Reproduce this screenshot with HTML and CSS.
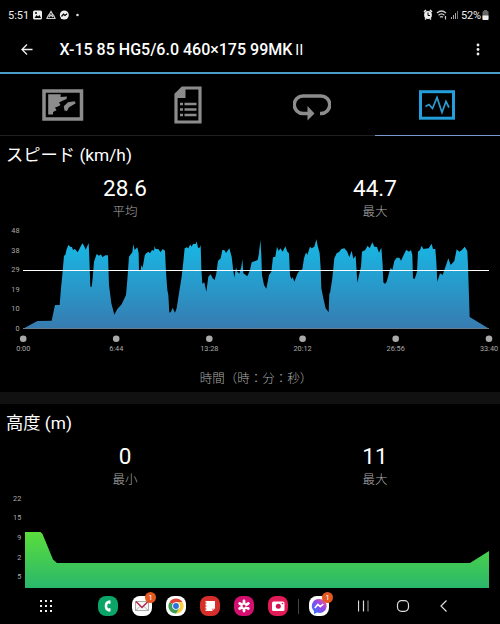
FILE: index.html
```
<!DOCTYPE html>
<html lang="ja">
<head>
    <meta charset="UTF-8">
    <meta name="viewport" content="width=device-width, initial-scale=1.0">
    <title>X-15 85 HG5/6.0 460×175 99MKⅡ</title>
    <link rel="stylesheet" href="styles.css">
</head>
<body>
    <div class="status-bar">
        <span class="clock">5:51</span>
        <svg class="status-icons" width="50" height="12" viewBox="0 0 50 12">
            <rect x="1" y="1.500" width="9" height="9" rx="1.500" fill="#eee"/>
            <path d="M2.500 9l2-3 1.500 1.500L7.500 6l1.500 3z" fill="#000"/>
            <circle cx="4" cy="4" r="1" fill="#000"/>
            <path d="M15 9.500h8L21.500 6h-5zM17 6l2-3.500L21 6M17 8l2-2 2 2" fill="none" stroke="#ccc" stroke-width="1.200"/>
            <circle cx="32.300" cy="6" r="4.500" fill="#eee"/>
            <path d="M29 10l0-3 3 3z" fill="#eee"/>
            <path d="M29.500 7.500l2-2.300 1.500 1.300 2-1.700" fill="none" stroke="#000" stroke-width="1.200"/>
            <circle cx="45.500" cy="6" r="1.300" fill="#ddd"/>
        </svg>
        <svg class="status-right" width="38" height="12" viewBox="0 0 38 12">
            <path d="M1 3l2-2M9 3L7 1M2 10.500l1-1M8 10.500l-1-1" stroke="#eee" stroke-width="1.500"/>
            <circle cx="5" cy="6" r="3.900" fill="#eee"/>
            <path d="M5 3.500v3h2" fill="none" stroke="#000"/>
            <path d="M14 4q4.500-4 9 0M15.500 6.300q3-2.700 6 0M17 8.300q1.500-1.300 3 0M22.500 7v3.500" fill="none" stroke="#ccc" stroke-width="1.200"/>
            <path d="M28.500 8v2M30.500 6v4M32.500 4v6" stroke="#aaa"/>
            <path d="M34.500 2v8" stroke="#777"/>
        </svg>
        <span class="battery-text">52%</span>
        <svg width="7" height="12" viewBox="0 0 7 12">
            <rect x="2" y="1" width="3" height="2" fill="#666"/>
            <rect x="0.500" y="2" width="6" height="9" rx="1" fill="#666"/>
            <path d="M.5 6.500h6V10q0 1-1 1h-4q-1 0-1-1z" fill="#eee"/>
        </svg>
    </div>

    <div class="app-bar">
        <svg width="14" height="14" viewBox="0 0 14 14">
            <path d="M12.500 6.500H2M7 1.500L2 6.500l5 5" fill="none" stroke="#eee" stroke-width="1.300"/>
        </svg>
        <h1>X-15 85 HG5/6.0 460×175 99MK<span class="numeral">Ⅱ</span></h1>
        <svg class="more" width="4" height="14" viewBox="0 0 4 14" fill="#eee">
            <circle cx="2" cy="2" r="1.400"/>
            <circle cx="2" cy="6.500" r="1.400"/>
            <circle cx="2" cy="11" r="1.400"/>
        </svg>
    </div>

    <div class="tabs">
        <div class="tab">
            <svg width="42" height="32" viewBox="0 0 42 32">
                <rect x="2" y="2" width="37.500" height="28" fill="none" stroke="#8c8c8c" stroke-width="3.500"/>
                <path d="M6.200 5.300H18.800L18.500 8 25 7.600 24.500 10 20 12 17 13.600 18.500 16 16 17.500 13 18.600 14.500 21.300 11 23V25.600H6.200z" fill="#8c8c8c"/>
                <path d="M21.800 17.300L26 13.300 32.500 12.300 33.800 14.300 30 16.600 26.800 18.600 25 22 22.500 21.600z" fill="#8c8c8c"/>
            </svg>
        </div>
        <div class="tab">
            <svg width="28" height="38" viewBox="0 0 28 38">
                <path d="M8.500 2H26v34H2V8.500z" fill="none" stroke="#8c8c8c" stroke-width="3.200"/>
                <path d="M11.500 1v11H1V8.500L8 1z" fill="#8c8c8c"/>
                <path d="M6 18h3M6 23.500h3M6 29h3M10.500 18h12M10.500 23.500h12M10.500 29h12" stroke="#8c8c8c" stroke-width="2.600"/>
            </svg>
        </div>
        <div class="tab loop">
            <svg width="38" height="28" viewBox="0 0 38 28">
                <path d="M15.500 20.500h-5.500a8.500 8.500 0 0 1 0-17.500h18a8.500 8.500 0 0 1 0 17.500h-1" fill="none" stroke="#8c8c8c" stroke-width="3.500"/>
                <path d="M14.500 13l7 7.500-7 7z" fill="#8c8c8c"/>
            </svg>
        </div>
        <div class="tab active">
            <svg width="36" height="30" viewBox="0 0 36 30">
                <rect x="1.500" y="1.700" width="33" height="26.500" fill="none" stroke="#239fdc" stroke-width="3"/>
                <path d="M6.500 16.500l3.500-2 3.500 4 4.500-11 5 15 4-11 3 6" fill="none" stroke="#2b9bd3" stroke-width="1.700"/>
            </svg>
        </div>
    </div>

    <section class="speed">
        <h2>スピード (km/h)</h2>
        <div class="stats">
            <div class="stat"><b>28.6</b><span>平均</span></div>
            <div class="stat"><b>44.7</b><span>最大</span></div>
        </div>
        <svg class="chart" width="500" height="130" viewBox="0 0 500 130">
            <defs>
                <linearGradient id="blue" gradientUnits="userSpaceOnUse" x1="0" y1="45" x2="0" y2="310">
                    <stop offset="0" stop-color="#17b9e6"/>
                    <stop offset="1" stop-color="#377bb0"/>
                </linearGradient>
            </defs>
            <g class="ticks">
                <text x="19.500" y="8">48</text>
                <text x="19.500" y="27.600">38</text>
                <text x="19.500" y="47.200">29</text>
                <text x="19.500" y="66.800">19</text>
                <text x="19.500" y="86.400">10</text>
                <text x="19.500" y="106">0</text>
            </g>
            <path transform="scale(.33333)" fill="url(#blue)" d="M72 310L112 288 155 287 165 240 179 240 183 190 187 150 192 92 196 90 199 76 205 60 212 66 216 66 219 75 225 72 233 82 240 68 247 55 252 62 257 74 266 54 268 100 271 185 275 185 278 160 282 110 290 87 297 92 303 88 307 97 316 91 324 91 327 180 334 235 343 269 352 252 365 238 378 210 382 165 387 95 397 82 400 58 404 75 412 67 416 85 417 138 422 138 424 120 428 128 434 92 437 86 445 80 450 85 456 75 462 77 464 63 467 72 475 72 482 82 488 72 495 77 498 140 502 195 505 210 508 263 513 260 518 248 525 263 530 250 537 205 545 155 550 110 554 70 560 67 565 70 571 58 574 65 580 56 587 57 590 49 594 68 599 68 602 60 604 130 607 176 613 172 619 200 625 155 632 148 638 160 644 165 649 145 654 108 662 100 667 75 673 75 678 84 688 70 695 95 699 130 703 158 708 127 712 140 718 146 724 125 727 102 730 145 742 154 750 135 755 112 773 105 777 85 781 45 784 90 786 150 792 180 799 191 807 150 814 140 819 97 826 95 831 65 836 78 841 70 848 80 856 64 862 80 867 85 870 150 874 162 878 157 883 170 893 145 898 138 907 133 912 100 918 82 922 90 930 65 935 70 943 65 949 43 953 62 959 85 962 130 964 190 970 220 977 250 986 262 988 205 990 205 997 160 1003 100 1010 85 1018 80 1024 72 1033 70 1042 80 1048 97 1055 77 1060 101 1067 92 1070 140 1072 173 1077 150 1083 125 1086 80 1095 76 1103 62 1109 70 1117 52 1123 65 1131 66 1137 83 1144 68 1148 120 1150 172 1155 177 1160 170 1167 145 1172 128 1177 135 1183 108 1190 98 1198 98 1203 107 1212 88 1219 74 1227 80 1233 75 1237 90 1239 160 1244 162 1251 140 1254 80 1260 75 1265 62 1270 72 1286 70 1295 56 1299 72 1306 72 1309 110 1312 170 1320 145 1328 150 1335 130 1345 100 1352 120 1363 108 1370 73 1378 80 1386 75 1394 65 1402 78 1404 120 1409 276 1465 310z"/>
            <!-- baseline and average speed -->
            <path d="M23 103.500h466" stroke="#647e8c"/>
            <path d="M23 45.500h466" stroke="#fff"/>
            <g fill="#aaa">
                <circle cx="23.200" cy="113.700" r="3.300"/>
                <circle cx="116.200" cy="113.700" r="3.300"/>
                <circle cx="209.300" cy="113.700" r="3.300"/>
                <circle cx="302.600" cy="113.700" r="3.300"/>
                <circle cx="395.700" cy="113.700" r="3.300"/>
                <circle cx="489" cy="113.700" r="3.300"/>
            </g>
            <g class="times">
                <text x="23.200" y="126">0:00</text>
                <text x="116.200" y="126">6:44</text>
                <text x="209.300" y="126">13:28</text>
                <text x="302.600" y="126">20:12</text>
                <text x="395.700" y="126">26:56</text>
                <text x="489" y="126">33:40</text>
            </g>
        </svg>
        <p class="axis-title">時間（時：分：秒）</p>
    </section>

    <section class="altitude">
        <h2>高度 (m)</h2>
        <div class="stats">
            <div class="stat"><b>0</b><span>最小</span></div>
            <div class="stat"><b>11</b><span>最大</span></div>
        </div>
        <svg class="chart" width="500" height="95" viewBox="0 0 500 95">
            <defs>
                <linearGradient id="green" x1="0" y1="0" x2="0" y2="1">
                    <stop offset="0" stop-color="#5add3c"/>
                    <stop offset="1" stop-color="#2ab76b"/>
                </linearGradient>
            </defs>
            <g class="ticks">
                <text x="21.300" y="7.500">22</text>
                <text x="21.300" y="27.200">15</text>
                <text x="21.300" y="46.900">9</text>
                <text x="21.300" y="66.600">2</text>
                <text x="21.300" y="86.300">5</text>
            </g>
            <path d="M25 39H40.500L42.500 41 53 66.500 57 70H470L489 58V95H25z" fill="url(#green)"/>
        </svg>
    </section>

    <nav class="nav-bar">
        <svg class="apps" width="12" height="12" viewBox="0 0 12 12" fill="#eee">
            <path d="M0 0h2v2H0zM5 0h2v2H5zM10 0h2v2h-2zM0 5h2v2H0zM5 5h2v2H5zM10 5h2v2h-2zM0 10h2v2H0zM5 10h2v2H5zM10 10h2v2h-2z"/>
        </svg>
        <div class="dock">
            <div class="app phone">
                <svg viewBox="0 0 20 20">
                    <path d="M11.500 5.800Q8 6 8 10t3.500 4.200" fill="none" stroke="#fff" stroke-width="2.600"/>
                    <path d="M10.500 4.500h2v3.200h-2zM10.500 12.300h2v3.200h-2z" fill="#fff"/>
                </svg>
            </div>
            <div class="app mail">
                <svg viewBox="0 0 20 20"><rect x="3.500" y="5.500" width="13" height="9" fill="#f7f7f7" stroke="#aaa"/><path d="M3.500 14.500l4.500-4M16.500 14.500l-4.500-4" stroke="#bbb"/><path d="M4 5.500l6 6 6-6" fill="none" stroke="#b3264e" stroke-width="1.500"/></svg>
                <span class="badge">1</span>
            </div>
            <div class="app chrome">
                <svg viewBox="0 0 20 20">
                    <path d="M10 10L3.500 6.200A7.500 7.500 0 0 1 16.500 6.200H10z" fill="#df4436"/>
                    <path d="M10 10V6.200h6.500A7.500 7.500 0 0 1 10 17.500L13.500 12z" fill="#f9cf3b"/>
                    <path d="M10 10l3.500 2L10 17.500A7.500 7.500 0 0 1 3.500 6.200z" fill="#3c9d53"/>
                    <circle cx="10" cy="10" r="3.800" fill="#fff"/><circle cx="10" cy="10" r="2.900" fill="#2a70df"/>
                </svg>
            </div>
            <div class="app notes">
                <svg viewBox="0 0 20 20"><path d="M5.500 5H15v7.500L12 15H5.500z" fill="#fff"/><path d="M4.500 7h2M4.500 10h2M4.500 13h2" stroke="#d72e2b"/><path d="M15 12.500h-3V15z" fill="#e99"/></svg>
            </div>
            <div class="app gallery">
                <svg viewBox="0 0 20 20"><path d="M10 5v10M5.700 7.500l8.600 5M5.700 12.500l8.600-5" stroke="#fff" stroke-width="2.800" stroke-linecap="round"/><circle cx="10" cy="10" r="1.500" fill="#d40f70"/></svg>
            </div>
            <div class="app camera">
                <svg viewBox="0 0 20 20"><rect x="4" y="5.500" width="12.500" height="9.500" rx="1.500" fill="#fff"/><circle cx="10.300" cy="10.300" r="2.500" fill="#cf1450"/><circle cx="14.500" cy="7.500" r=".8" fill="#cf1450"/></svg>
            </div>
            <span class="separator"></span>
            <div class="app messenger">
                <svg viewBox="0 0 20 20">
                    <defs><linearGradient id="chat" x1="0" y1="1" x2="1" y2="0"><stop offset="0" stop-color="#217dff"/><stop offset=".55" stop-color="#9046ed"/><stop offset="1" stop-color="#fb5e82"/></linearGradient></defs>
                    <path d="M10 3a7.300 7 0 1 1-2 13.600L5 18v-3A7.200 7 0 0 1 10 3z" fill="url(#chat)"/>
                    <path d="M5.800 12l3-3.500 2.500 2.200L14.300 8" fill="none" stroke="#fff" stroke-width="1.600"/>
                </svg>
                <span class="badge">1</span>
            </div>
        </div>
        <svg class="system" width="92" height="14" viewBox="0 0 92 14" fill="none" stroke="#ddd" stroke-width="1.200">
            <path d="M.5 1.500v11M5.500 1.500v11"/><path d="M10 1.500v11" stroke="#888"/>
            <rect x="39.500" y="1.700" width="11" height="10.600" rx="4"/>
            <path d="M88.500 1.500L83 7l5.500 5.500"/>
        </svg>
    </nav>
</body>
</html>
```
FILE: styles.css
```
* {
    box-sizing: border-box;
}
body {
    margin: 0;
    width: 500px;
    height: 624px;
    overflow: hidden;
    background-color: #000;
    color: #fff;
    font-family: Roboto, "Noto Sans CJK JP", sans-serif;
}
svg {
    display: block;
    flex-shrink: 0;
}
.status-bar {
    display: flex;
    align-items: center;
    height: 30px;
    padding: 0 11px 0 8px;
    font-size: 11px;
    color: #eee;
}
.clock {
    width: 24px;
}
.status-right {
    margin-left: auto;
}
.battery-text {
    width: 21px;
    letter-spacing: -0.2px;
}
.app-bar {
    display: flex;
    align-items: center;
    height: 44px;
    padding: 0 20px;
    padding-bottom: 4px;
    border-bottom: 2px solid #4b9fc7;
}
.app-bar svg {
    margin-top: 1px;
}
h1 {
    margin: 1px 0 0 25.6px;
    font-size: 16px;
    line-height: 20px;
    font-weight: 500;
    white-space: nowrap;
}
.numeral {
    font-family: "Noto Sans CJK JP", sans-serif;
    font-size: 14px;
    line-height: 1;
    font-weight: 400;
}
.more {
    margin-left: auto;
}
.tabs {
    display: flex;
    height: 62px;
}
.tab {
    display: flex;
    width: 125px;
    align-items: center;
    justify-content: center;
    border-bottom: 1px solid #202020;
}
.loop {
    padding-top: 4px;
    padding-right: 2px;
}
.tab.active {
    padding-right: 2px;
    border-bottom: 1px solid #7898d0;
}
section {
    overflow: hidden;
}
.speed {
    height: 256px;
}
.altitude {
    height: 196px;
    border-top: 12px solid #111;
}
h2 {
    margin: 7px 0 0 6px;
    height: 24px;
    font-size: 17.3px;
    line-height: 24px;
    font-weight: 400;
}
.stats {
    display: flex;
    height: 58px;
    padding-top: 8px;
}
.stat {
    flex: 1;
    text-align: center;
}
.stat b {
    display: block;
    height: 27px;
    font-size: 22.5px;
    line-height: 26px;
    font-weight: 400;
}
.stat span {
    display: block;
    font-size: 12.5px;
    line-height: 20px;
    font-weight: 300;
    color: #aaa;
}
.ticks text, .times text {
    font-size: 7.3px;
    fill: #aaa;
}
.ticks text {
    text-anchor: end;
}
.times text {
    text-anchor: middle;
}
.axis-title {
    margin: 14px 0 0 12px;
    text-align: center;
    font-size: 12.5px;
    line-height: 20px;
    font-weight: 300;
    color: #aaa;
}
.nav-bar {
    display: flex;
    align-items: center;
    height: 36px;
    padding: 0 50px 0 40px;
}
.dock {
    display: flex;
    align-items: center;
    gap: 14px;
    margin-left: 46px;
}
.app {
    position: relative;
    width: 20px;
    height: 20px;
    border-radius: 8px;
    background-color: #fff;
}
.phone {
    background-color: #0ba568;
}
.notes {
    background-color: #d72e2b;
}
.gallery {
    background-color: #d40f70;
}
.camera {
    background-color: #e01b55;
}
.separator {
    width: 1px;
    height: 15px;
    margin: 0 -4px;
    background-color: #444;
}
.badge {
    position: absolute;
    top: -4px;
    right: -4px;
    width: 11px;
    height: 11px;
    border-radius: 50%;
    background-color: #e4571f;
    font-size: 8px;
    line-height: 11px;
    text-align: center;
}
.system {
    margin-left: auto;
}
```
